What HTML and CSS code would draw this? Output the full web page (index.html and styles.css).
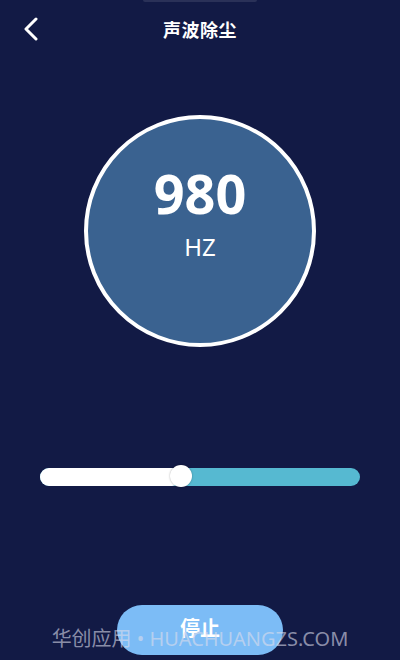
FILE: index.html
```html
<!DOCTYPE html>
<html>
<head>
<meta charset="UTF-8">
<title>声波除尘</title>
<link rel="stylesheet" href="styles.css">
</head>
<body>
<div class="screen">
  <div class="notch"></div>
  <div class="header">
    <svg class="back" width="16" height="24" viewBox="0 0 16 24">
      <path d="M13 2 L3 12 L13 22" fill="none" stroke="#fff" stroke-width="3" stroke-linecap="round" stroke-linejoin="round"/>
    </svg>
    <div class="title">声波除尘</div>
  </div>

  <div class="dial-wrap">
    <div class="dial">
      <div class="value">980</div>
      <div class="unit">HZ</div>
    </div>
  </div>

  <div class="slider">
    <div class="track-fill" style="width: 44%"></div>
    <div class="thumb" style="left: 44%"></div>
  </div>

  <div class="actions">
    <button class="stop-button">停止</button>
  </div>

  <div class="watermark">华创应用 • HUACHUANGZS.COM</div>
</div>
</body>
</html>
```

FILE: styles.css
```css
  body {
    margin: 0;
    padding: 0;
    background-color: #121a45;
    font-family: "Noto Sans", "Noto Sans CJK SC", sans-serif;
  }

  .screen {
    position: relative;
    width: 400px;
    height: 660px;
    overflow: hidden;
    background-color: #121a45;
  }

  .notch {
    position: absolute;
    top: 0;
    left: 143px;
    width: 114px;
    height: 2px;
    background-color: #2a3158;
    border-radius: 0 0 4px 4px;
  }

  .header {
    position: relative;
    height: 58px;
    display: flex;
    align-items: center;
    justify-content: center;
  }

  .back {
    position: absolute;
    left: 23px;
    top: 17px;
  }

  .title {
    color: #fff;
    font-size: 18px;
    font-weight: bold;
    font-family: "Noto Sans CJK SC", sans-serif;
    letter-spacing: 0.5px;
  }

  .dial-wrap {
    display: flex;
    justify-content: center;
    padding-top: 57px;
  }

  .dial {
    width: 224px;
    height: 224px;
    border: 4px solid #fff;
    border-radius: 50%;
    background-color: #3a6290;
    display: flex;
    flex-direction: column;
    align-items: center;
    color: #fff;
  }

  .value {
    margin-top: 37px;
    font-size: 54px;
    font-weight: bold;
    line-height: 74px;
  }

  .unit {
    font-size: 24px;
    line-height: 33px;
  }

  .slider {
    position: relative;
    margin: 121px 40px 0 40px;
    height: 18px;
    border-radius: 9px;
    background-color: #56b9d1;
  }

  .track-fill {
    height: 18px;
    border-radius: 9px;
    background-color: #fff;
  }

  .thumb {
    position: absolute;
    top: -3px;
    width: 22px;
    height: 22px;
    margin-left: -11px;
    border-radius: 50%;
    background-color: #fff;
    box-shadow: 0 0 2px rgba(0, 0, 0, 0.35);
  }

  .actions {
    display: flex;
    justify-content: center;
    margin-top: 119px;
  }

  .stop-button {
    width: 166px;
    height: 50px;
    border: none;
    border-radius: 25px;
    background-color: #7cbcf6;
    color: #fff;
    font-size: 20px;
    font-weight: bold;
    font-family: "Noto Sans CJK SC", sans-serif;
    padding: 0 0 6px 0;
  }

  .watermark {
    position: absolute;
    left: 0;
    right: 0;
    top: 623px;
    text-align: center;
    color: rgba(220, 220, 235, 0.6);
    font-size: 20px;
    font-family: "Noto Sans", "Noto Sans CJK SC", sans-serif;
    white-space: nowrap;
  }
```
